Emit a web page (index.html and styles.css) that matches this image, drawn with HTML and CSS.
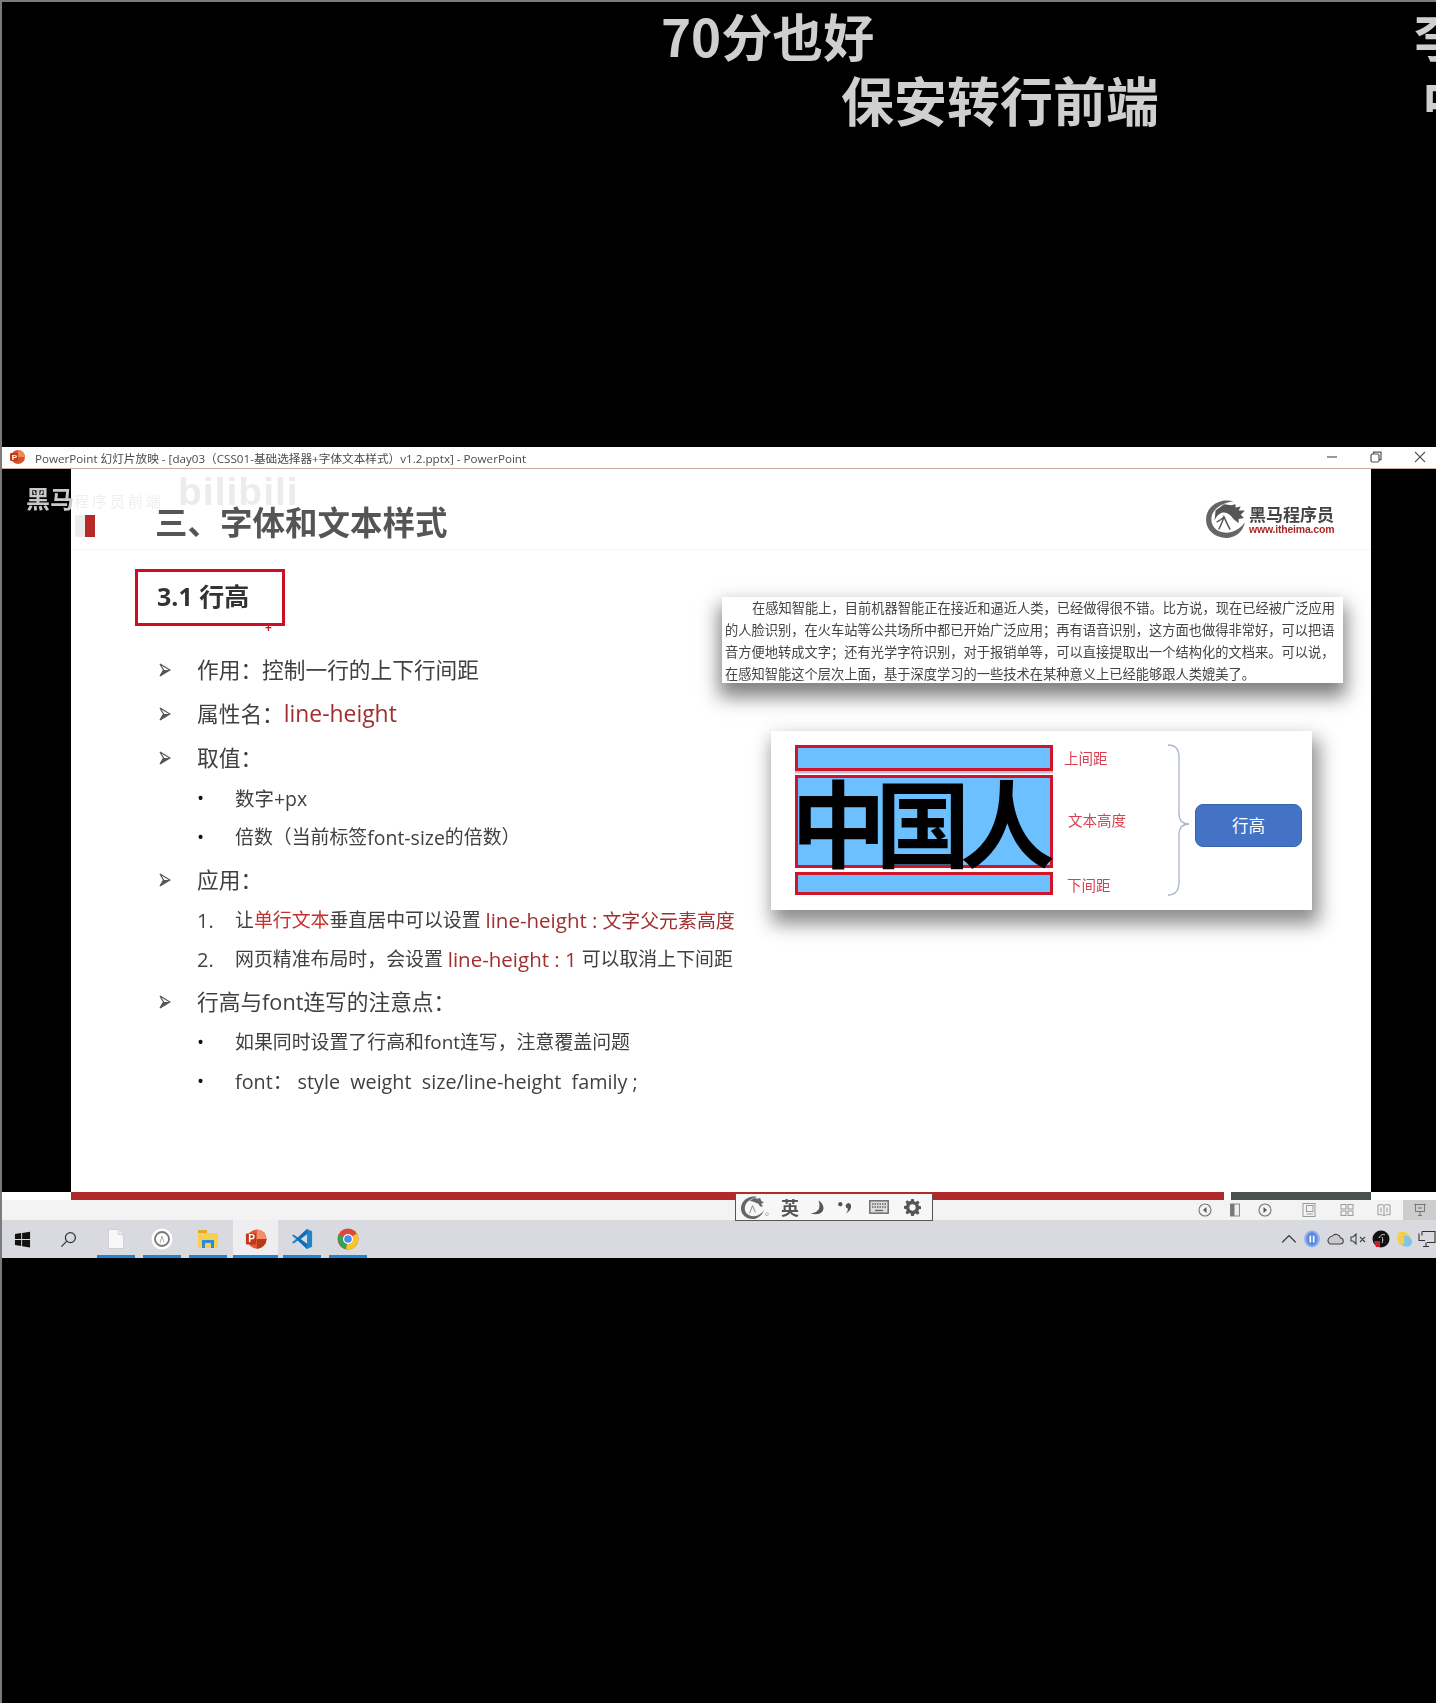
FILE: index.html
```html
<!DOCTYPE html>
<html lang="zh-CN">
<head>
<meta charset="utf-8">
<title>PowerPoint 幻灯片放映</title>
<link rel="stylesheet" href="styles.css">
</head>
<body>
<div class="screen">
  <div class="top-black">
    <span class="dm dm-a">70分也好</span>
    <span class="dm dm-b">保安转行前端</span>
    <span class="dm dm-c">李</span>
    <span class="dm dm-d">中</span>
  </div>
  <div class="window">
    <div class="titlebar">
      <svg class="ppt-mini" viewBox="0 0 16 16"><circle cx="9" cy="8" r="7" fill="#d9502e"/><path d="M9 1a7 7 0 0 1 7 7H9z" fill="#ee8a55"/><rect x="1" y="4" width="8" height="8" rx="1" fill="#c23a1c"/><text x="2.8" y="10.6" class="ppt-p">P</text></svg>
      <span class="title-text">PowerPoint 幻灯片放映 - [day03（CSS01-基础选择器+字体文本样式）v1.2.pptx] - PowerPoint</span>
      <div class="win-ctrls">
        <svg viewBox="0 0 12 12"><path d="M1 6h10" stroke="#555" stroke-width="1.2"/></svg>
        <svg viewBox="0 0 12 12" fill="none" stroke="#555" stroke-width="1.2"><rect x="1" y="3" width="8" height="8" rx="1.5"/><path d="M3.5 3V1.2H11V8.6H9"/></svg>
        <svg viewBox="0 0 12 12"><path d="M1 1l10 10M11 1L1 11" stroke="#555" stroke-width="1.1"/></svg>
      </div>
    </div>
    <div class="stage">
      <div class="slide">
        <header class="slide-head">
          <span class="marker"></span>
          <h1 class="slide-title">三、字体和文本样式</h1>
          <div class="brand">
            <svg class="brand-mark" viewBox="0 0 40 38" fill="none">
              <path d="M28 2C14-1 2 7 2 20c0 10 9 17 19 17 9 0 16-6 18-15-4 6-11 10-18 10C12 32 7 26 7 19 7 11 15 4 28 2z" fill="#666"/>
              <path d="M11 11l8-6 7 1 4-1v3l5-1-2 4h6l-4 4 3 3-5 1v4l-5-4c-3-5-7-7-11-6-3 1-6 4-7 8z" fill="#555"/>
              <path d="M14 29c2-4 4-8 5-12 2 4 4 9 6 12M19 17c-2 2-5 4-7 5" stroke="#555" stroke-width="1.4"/>
            </svg>
            <div class="brand-text">
              <span class="brand-cn">黑马程序员</span>
              <span class="brand-url">www.itheima.com</span>
            </div>
          </div>
        </header>
        <div class="slide-body">
          <section class="col-left">
            <div class="section-box">3.1 行高<span class="cursor-mark">+</span></div>
            <ul class="points">
              <li class="l1"><svg class="arrow" viewBox="0 0 12 14"><path d="M1 1l10 6-10 6 3.500-6z" fill="#fff" stroke="#555" stroke-width="1.200"/><path d="M4.500 7H11l-10 6z" fill="#555"/></svg>作用：控制一行的上下行间距</li>
              <li class="l1"><svg class="arrow" viewBox="0 0 12 14"><path d="M1 1l10 6-10 6 3.500-6z" fill="#fff" stroke="#555" stroke-width="1.200"/><path d="M4.500 7H11l-10 6z" fill="#555"/></svg>属性名：<span class="hl-dark lat">line-height</span></li>
              <li class="l1"><svg class="arrow" viewBox="0 0 12 14"><path d="M1 1l10 6-10 6 3.500-6z" fill="#fff" stroke="#555" stroke-width="1.200"/><path d="M4.500 7H11l-10 6z" fill="#555"/></svg>取值：</li>
              <li class="l2"><span class="mark">•</span><span class="lat-s">数字+px</span></li>
              <li class="l2"><span class="mark">•</span>倍数（当前标签<span class="lat-s">font-size</span>的倍数）</li>
              <li class="l1"><svg class="arrow" viewBox="0 0 12 14"><path d="M1 1l10 6-10 6 3.500-6z" fill="#fff" stroke="#555" stroke-width="1.200"/><path d="M4.500 7H11l-10 6z" fill="#555"/></svg>应用：</li>
              <li class="l2"><span class="mark num">1.</span>让<span class="hl">单行文本</span>垂直居中可以设置 <span class="hl-dark"><span class="lat-r">line-height :</span> 文字父元素高度</span></li>
              <li class="l2"><span class="mark num">2.</span>网页精准布局时，会设置 <span class="hl-dark lat-r">line-height : 1</span> 可以取消上下间距</li>
              <li class="l1"><svg class="arrow" viewBox="0 0 12 14"><path d="M1 1l10 6-10 6 3.500-6z" fill="#fff" stroke="#555" stroke-width="1.200"/><path d="M4.500 7H11l-10 6z" fill="#555"/></svg>行高与font连写的注意点：</li>
              <li class="l2"><span class="mark">•</span>如果同时设置了行高和font连写，注意覆盖问题</li>
              <li class="l2"><span class="mark">•</span><span class="lat-f">font： style&nbsp; weight&nbsp; size/line-height&nbsp; family ;</span></li>
            </ul>
          </section>
          <section class="col-right">
            <div class="doc-card">
              <span class="doc-line doc-first">在感知智能上，目前机器智能正在接近和逼近人类，已经做得很不错。比方说，现在已经被广泛应用</span>
              <span class="doc-line">的人脸识别，在火车站等公共场所中都已开始广泛应用；再有语音识别，这方面也做得非常好，可以把语</span>
              <span class="doc-line">音方便地转成文字；还有光学字符识别，对于报销单等，可以直接提取出一个结构化的文档来。可以说，</span>
              <span class="doc-line">在感知智能这个层次上面，基于深度学习的一些技术在某种意义上已经能够跟人类媲美了。</span>
            </div>
            <div class="diagram">
              <div class="rows">
                <div class="row row-a"><div class="bar bar-a"></div><span class="lab lab-a">上间距</span></div>
                <div class="row row-b"><div class="bar bar-b">中国人</div><span class="lab lab-b">文本高度</span></div>
                <div class="row row-c"><div class="bar bar-c"></div><span class="lab lab-c">下间距</span></div>
              </div>
              <svg class="brace" viewBox="0 0 23 152" fill="none"><path d="M1 1c8 0 11 4 11 12v56c0 7 3 11 10 11-7 0-10 4-10 11v47c0 8-3 13-11 13" stroke="#a9b6cf" stroke-width="1.3"/></svg>
              <div class="lh-btn">行高</div>
            </div>
          </section>
        </div>
      </div>
      <div class="wm-left">黑马</div>
      <div class="wm-faint">程序员前端</div>
      <div class="wm-bili">bilibili</div>
    </div>
    <div class="progress-row">
      <div class="progress-red"></div>
      <div class="progress-dark"></div>
    </div>
    <div class="statusbar">
      <svg class="st" viewBox="0 0 14 14" fill="none"><circle cx="7" cy="7" r="6" stroke="#777" stroke-width="1.100"/><path d="M8.500 4v6L5 7z" fill="#555"/></svg>
      <svg class="st" viewBox="0 0 14 14"><rect x="2.500" y="1" width="9" height="12" fill="#eee" stroke="#888"/><rect x="2.500" y="1" width="4" height="12" fill="#777"/></svg>
      <svg class="st" viewBox="0 0 14 14" fill="none"><circle cx="7" cy="7" r="6" stroke="#777" stroke-width="1.100"/><path d="M5.500 4v6L9 7z" fill="#555"/></svg>
      <svg class="st st-norm" viewBox="0 0 14 14" fill="none" stroke="#999"><rect x="1" y=".5" width="12" height="13"/><rect x="4.500" y="2.500" width="6.500" height="6"/><path d="M4.500 11h6.500"/></svg>
      <svg class="st st-sort" viewBox="0 0 14 14" fill="none" stroke="#999"><rect x="1" y="1.500" width="5" height="4.500"/><rect x="8" y="1.500" width="5" height="4.500"/><rect x="1" y="8" width="5" height="4.500"/><rect x="8" y="8" width="5" height="4.500"/></svg>
      <svg class="st st-read" viewBox="0 0 14 14" fill="none" stroke="#999"><path d="M7 2.500C5.500 1.500 3 1.500 1 2v10c2-.5 4.500-.5 6 .5 1.500-1 4-1 6-.5V2c-2-.5-4.500-.5-6 .5zM7 2.500v10M4 4.500v5M10 4.500v5"/></svg>
      <div class="st-show"><svg class="st" viewBox="0 0 14 14" fill="none" stroke="#777"><path d="M1 1.500h12M2.500 1.500v7h9v-7M7 8.500v4M5 12.500h4M5 5h4"/></svg></div>
    </div>
    <div class="taskbar">
      <div class="tb-sys tb-win"><svg viewBox="0 0 18 18"><path d="M1 3.200l6.600-1v6.300H1zM8.600 2l8.400-1.300v7.800H8.600zM1 9.600h6.600v6.200l-6.600-1zM8.600 9.600H17v7.800l-8.400-1.300z" fill="#111"/></svg></div>
      <div class="tb-sys tb-search"><svg viewBox="0 0 18 18" fill="none" stroke="#333" stroke-width="1.300"><circle cx="11" cy="7" r="5.300"/><path d="M7 11l-5.500 5.500"/></svg></div>
      <div class="tb-app"><svg viewBox="0 0 18 22"><path d="M1.500 1.500h10l5 5v14h-15z" fill="#f8f8f8" stroke="#cfcfd4"/><path d="M11.500 1.500v5h5" fill="#eee" stroke="#cfcfd4"/></svg></div>
      <div class="tb-app"><svg viewBox="0 0 22 22" fill="none"><circle cx="11" cy="11" r="10.500" fill="#fff"/><circle cx="11" cy="11" r="7" stroke="#777" stroke-width="1.800"/><path d="M9 15l2-7 2 6" stroke="#999" stroke-width=".8"/></svg></div>
      <div class="tb-app"><svg viewBox="0 0 22 20"><path d="M1 2h8v2h12v15H1z" fill="#f6cf57"/><rect x="1" y="1" width="9" height="3" fill="#e2a92c"/><path d="M5 11h12v8h-3v-5H8v5H5z" fill="#2d8ccf"/></svg></div>
      <div class="tb-app tb-ppt"><svg viewBox="0 0 24 22"><circle cx="13" cy="11" r="10.500" fill="#dc5a36"/><path d="M13 .5A10.500 10.500 0 0 1 23.500 11H13z" fill="#f0906a"/><path d="M13 11h10.500A10.500 10.500 0 0 1 13 21.500z" fill="#b93a1a"/><rect x="1" y="5" width="11" height="12" rx="1" fill="#c4371a"/><text x="3.500" y="14.500" class="ppt-p big">P</text></svg></div>
      <div class="tb-app"><svg viewBox="0 0 24 24"><path d="M17.500 1L23 3.500v17L17.500 23 7.500 13.700 3 17 1 15.800 5.500 12 1 8.200 3 7l4.500 3.300z" fill="#1f84cc"/><path d="M17.500 1v22L7.500 13.700 5.500 12l2-1.700z" fill="#0f6fb8"/><path d="M17.500 6.800v10.400L10.500 12z" fill="#d9dae0"/></svg></div>
      <div class="tb-app"><svg viewBox="0 0 22 22"><circle cx="11" cy="11" r="10.500" fill="#e0463a"/><path d="M11 11L2 6.500A10.500 10.500 0 0 0 9 21.300z" fill="#34a353"/><path d="M11 11l8.700-5.600h.1A10.500 10.500 0 0 1 9 21.300z" fill="#f7c52e"/><circle cx="11" cy="11" r="5" fill="#fff"/><circle cx="11" cy="11" r="3.800" fill="#4b8bf0"/></svg></div>
      <div class="tray">
        <svg viewBox="0 0 16 16" fill="none"><path d="M2 11l6-6 6 6" stroke="#333" stroke-width="1.200"/></svg>
        <svg viewBox="0 0 16 16"><ellipse cx="8" cy="8" rx="7" ry="7.500" fill="#8fb0ee"/><ellipse cx="8" cy="8" rx="5" ry="6" fill="#5f89de"/><path d="M6.500 5v6M9.500 5v6" stroke="#fff" stroke-width="1.400"/></svg>
        <svg viewBox="0 0 18 16" fill="none"><path d="M4.500 13h9.500a3 3 0 0 0 .5-6C13.500 3.500 9 2 6.500 5 3.500 5 1 9 2.500 11.500c.5 1 1 1.500 2 1.500z" fill="#c9c9ce" stroke="#444" stroke-width="1.100"/></svg>
        <svg viewBox="0 0 18 16" fill="none" stroke="#444" stroke-width="1.100"><path d="M2 6v4h2l3 3V3L4 6zM11 6l5 5M16 6l-5 5"/></svg>
        <svg viewBox="0 0 18 18"><circle cx="9" cy="9" r="8.500" fill="#111"/><path d="M2 11h6v6H4z" fill="#d11a2a"/><path d="M7 8c2-4 5-4 6-3M10 13c1-2 1-4 0-6" stroke="#ddd" fill="none"/></svg>
        <svg viewBox="0 0 18 18"><path d="M4 2c6-2 12 2 11 8-1 5-6 7-9 5C2 13 1 5 4 2z" fill="#f3cf4e"/><path d="M8 6c4-1 9 1 9 6s-6 6-10 3c3-2 3-6 1-9z" fill="#7fc4ea"/></svg>
        <svg viewBox="0 0 18 18" fill="none" stroke="#333" stroke-width="1.100"><path d="M4 1.500h13v11H9M4 1.500v4M8 12.500v4M5 16.500h6"/><path d="M1 3.500v7h6"/></svg>
      </div>
    </div>
    <div class="ime">
      <svg class="ime-logo" viewBox="0 0 26 26" fill="none"><path d="M18 2C9 0 1 6 1 14c0 6 5 11 12 11 6 0 11-5 12-10-2 4-6 7-11 7-6 0-9-4-9-8C5 8 10 4 18 2z" fill="#666"/><path d="M10 6l5-3 3 1 3-1 1 3 3 2-3 1 2 3-3 0-2-3-5-2z" fill="#666"/><path d="M10 19l3-8 3 7" stroke="#888" stroke-width="1"/></svg>
      <span class="ime-dot">。</span>
      <span class="ime-en">英</span>
      <svg class="ime-ic ime-moon" viewBox="0 0 16 16"><path d="M9 .5c5 3 7 8 4 12-2.500 3-8 3.500-12.500 1.500 4.500 0 9-2 9.500-6.500C10.300 5 10 2.500 9 .5z" fill="#555"/></svg>
      <svg class="ime-ic ime-comma" viewBox="0 0 15 16"><circle cx="2.500" cy="4.500" r="2.300" fill="#555"/><path d="M9.500 4a2.700 2.700 0 0 1 4.500 2.300c0 4-2.500 6.500-5.500 8 1.500-1.800 2.300-3.500 2-5.200A2.800 2.800 0 0 1 9.500 4z" fill="#555"/></svg>
      <svg class="ime-ic ime-kb" viewBox="0 0 20 14" fill="none"><rect x=".8" y=".8" width="18.400" height="12.400" fill="#ddd" stroke="#666" stroke-width="1.400"/><path d="M3 4h14M3 7h14" stroke="#666" stroke-width="1.400" stroke-dasharray="1.500 1"/><path d="M6 10.500h8" stroke="#666" stroke-width="1.400"/></svg>
      <svg class="ime-ic ime-gear" viewBox="0 0 20 20"><path d="M8.500 0h3l.5 2.600 2 .8 2.200-1.500 2.100 2.100-1.500 2.200.8 2 2.600.5v3l-2.600.5-.8 2 1.500 2.200-2.100 2.100-2.200-1.500-2 .8-.5 2.600h-3L8 17.400l-2-.8-2.200 1.500-2.100-2.100L3.200 13.800l-.8-2L-.2 11.300v-3l2.600-.5.800-2L1.700 3.600l2.100-2.100L6 3l2-.8z" fill="#555"/><circle cx="10" cy="10" r="3.700" fill="#f7f7f7"/></svg>
    </div>
  </div>
</div>
</body>
</html>
```

FILE: styles.css
```css
* { box-sizing: border-box; }
html, body { margin: 0; padding: 0; background: #000; }
body { width: 1436px; height: 1703px; overflow: hidden; font-family: "Open Sans", "Noto Sans CJK SC", sans-serif; }
.screen { width: 1436px; height: 1703px; border-top: 2px solid #7b7b7b; border-left: 2px solid #7b7b7b; background: #000; overflow: hidden; }

/* floating comments */
.top-black { position: relative; height: 445px; }
.dm { position: absolute; font-family: "Noto Sans CJK SC", sans-serif; font-weight: 700; line-height: 60px; color: #cfcfcf; white-space: nowrap; }
.dm-a { left: 659px; top: 3px; font-size: 51px; }
.dm-b { left: 839px; top: 67px; font-size: 53px; }
.dm-c { left: 1412px; top: 3px; font-size: 52px; }
.dm-d { left: 1420px; top: 67px; font-size: 52px; }

/* window */
.window { position: relative; filter: blur(.4px); }
.titlebar { height: 22px; background: #fff; border-bottom: 1px solid #c9ab9f; display: flex; align-items: center; padding-bottom: 1px; }
.ppt-mini { width: 16px; height: 16px; margin-left: 7px; }
.ppt-p { font-family: "Liberation Sans", sans-serif; font-weight: 700; font-size: 8px; fill: #fff; }
.ppt-p.big { font-size: 11px; }
.title-text { margin-left: 10px; font-size: 11.650px; color: #4a4a4a; white-space: nowrap; font-family: "Open Sans", "Noto Sans CJK SC", sans-serif; }
.win-ctrls { margin-left: auto; display: flex; align-items: center; gap: 32px; padding-right: 10px; }
.win-ctrls svg { width: 12px; height: 12px; display: block; }

.stage { position: relative; height: 723px; padding-left: 69px; }
.slide { width: 1300px; height: 723px; background: #fff; }
.slide-head { height: 81px; padding-top: 24px; padding-left: 14px; display: flex; align-items: center; border-bottom: 1px solid #f5f5f5; position: relative; z-index: 1; }
.marker { width: 10px; height: 22px; background: #b72a2a; margin-top: 9px; box-shadow: -10px 0 0 #ededed; }
.slide-title { margin: 0 0 0 60px; font-size: 32.500px; line-height: 40px; font-weight: 700; color: #555; font-family: "Noto Sans CJK SC", sans-serif; white-space: nowrap; }
.brand { margin-left: auto; margin-right: 36px; display: flex; align-items: center; gap: 3px; margin-top: -5px; }
.brand-mark { width: 42px; height: 40px; display: block; }
.brand-text { display: flex; flex-direction: column; width: 86px; padding-top: 4px; }
.brand-cn { font-size: 17px; line-height: 18px; font-weight: 700; color: #444; font-family: "Noto Sans CJK SC", sans-serif; white-space: nowrap; }
.brand-url { font-family: "Liberation Sans", sans-serif; font-weight: 700; font-size: 10.500px; line-height: 13px; color: #a92a2a; white-space: nowrap; letter-spacing: -.2px; }

.slide-body { display: flex; }
.col-left { width: 651px; padding-left: 64px; padding-top: 19px; }
.section-box { position: relative; width: 150px; height: 57px; border: 3px solid #cc0f25; padding-left: 19px; font-size: 25px; line-height: 48px; font-weight: 700; color: #333; white-space: nowrap; }
.cursor-mark { position: absolute; left: 127px; top: 50px; font-size: 12px; line-height: 12px; color: #cc0f25; font-weight: 700; }

.points { list-style: none; margin: 23px 0 0; padding: 0 0 0 24px; color: #404040; }
.points li { display: flex; align-items: center; white-space: pre; }
.l1 { height: 42px; margin-top: 2px; font-size: 21.700px; line-height: 42px; }
.l2 { height: 39px; font-size: 18.900px; line-height: 39px; }
.arrow { width: 12px; height: 14px; margin-right: 26px; flex: none; }
.mark { display: inline-block; width: 38px; flex: none; margin-left: 38px; color: #111; }
.mark.num { font-size: 20px; color: #444; }
.hl { color: #c4322e; }
.hl-dark { color: #a03030; }
.lat { font-size: 1.055em; }
.lat-r { font-size: 1.085em; }
.lat-f { font-size: 1.045em; }
.lat-s { font-size: 1.03em; }

.col-right { width: 648px; padding-top: 48px; }
.doc-card { width: 621px; height: 86px; background: #fff; padding-left: 3px; box-shadow: 0 11px 18px 3px rgba(0,0,0,.5); font-family: "Noto Sans CJK SC", sans-serif; font-size: 13.260px; line-height: 22px; color: #444; }
.doc-line { display: block; white-space: nowrap; }
.doc-first { padding-left: 27px; margin-top: -1px; }

.diagram { margin: 48px 0 0 49px; width: 541px; height: 179px; background: #fff; box-shadow: 4px 11px 18px 3px rgba(0,0,0,.45); display: flex; align-items: flex-start; padding: 13px 0 0 24px; }
.rows { width: 372px; display: flex; flex-direction: column; gap: 4px; padding-top: 1px; }
.row { display: flex; align-items: center; }
.bar { width: 258px; background: #6cc0ff; border: 3px solid #d0142c; flex: none; }
.bar-a { height: 26px; box-shadow: 0 2.500px 0 #c3b9d6; }
.bar-b { height: 93px; font-family: "Noto Sans CJK SC", sans-serif; font-weight: 700; font-size: 95px; letter-spacing: -10.500px; line-height: 84px; color: #000; text-indent: -7px; text-align: left; white-space: nowrap; }
.bar-c { height: 23px; }
.lab { font-family: "Noto Sans CJK SC", sans-serif; font-size: 14.500px; color: #dc3f50; white-space: nowrap; }
.lab-a { margin-left: 11px; margin-bottom: 1px; }
.lab-b { margin-left: 15px; margin-bottom: 5px; }
.lab-c { margin-left: 14px; margin-top: 1px; }
.brace { width: 23px; height: 152px; flex: none; }
.lh-btn { margin: 60px 0 0 5px; width: 107px; height: 43px; background: #4472c4; border: 1px solid #3a62a8; border-radius: 8px; color: #fff; font-family: "Noto Sans CJK SC", sans-serif; font-size: 16.500px; line-height: 41px; text-align: center; }

.progress-row { height: 8px; display: flex; background: #fff; padding-left: 69px; }
.progress-red { width: 1153px; background: #b12a2a; }
.progress-dark { width: 140px; margin-left: 7px; background: #4a4f4f; }

.statusbar { height: 20px; background: #f3f3f3; display: flex; align-items: center; padding-left: 1196px; }
.st { width: 14px; height: 14px; display: block; margin-right: 16px; flex: none; }
.st-norm { margin-left: 14px; margin-right: 24px; }
.st-sort { margin-right: 23px; }
.st-read { margin-right: 0; }
.st-show { margin-left: auto; width: 33px; height: 20px; background: #cdcdcd; display: flex; align-items: center; justify-content: center; }
.st-show .st { margin: 0; }

.taskbar { height: 38px; background: #d9dae0; display: flex; align-items: stretch; gap: 8px; }
.tb-sys { display: flex; align-items: center; justify-content: center; flex: none; }
.tb-win { width: 40px; margin-right: -8px; }
.tb-win svg { width: 17px; height: 17px; }
.tb-search { width: 52px; margin-right: -5px; }
.tb-search svg { width: 17px; height: 17px; }
.tb-app { width: 38px; flex: none; display: flex; align-items: center; justify-content: center; border-bottom: 3px solid #1a86d8; padding-top: 2px; }
.tb-app svg { width: 22px; height: 22px; }
.tb-ppt { width: 45px; margin: 0 -3px 0 -2px; background: #eeeef0; }
.tray { margin-left: auto; display: flex; align-items: center; }
.tray svg { width: 18px; height: 18px; margin: 0 2.500px; flex: none; }
.tray svg:last-child { margin: 0 0 0 3px; }

.ime { position: absolute; left: 733px; top: 746px; width: 198px; height: 28px; background: #f7f7f7; border: 1px solid #555; display: flex; align-items: center; padding-left: 4px; }
.ime-logo { width: 25px; height: 25px; flex: none; }
.ime-dot { font-size: 10px; width: 16px; color: #777; font-family: "Noto Sans CJK SC", sans-serif; padding-top: 6px; flex: none; }
.ime-en { font-family: "Noto Sans CJK SC", sans-serif; font-weight: 700; font-size: 18px; line-height: 26px; color: #555; width: 29px; flex: none; }
.ime-ic { flex: none; }
.ime-moon { width: 15px; height: 15px; margin-right: 13px; }
.ime-comma { width: 14px; height: 15px; margin-right: 17px; }
.ime-kb { width: 20px; height: 14px; margin-right: 15px; }
.ime-gear { width: 17px; height: 17px; }

/* video watermarks */
.wm-left { position: absolute; left: 24px; top: 15px; font-family: "Noto Sans CJK SC", sans-serif; font-weight: 700; font-size: 24px; line-height: 28px; color: #c9c9c9; }
.wm-faint { position: absolute; left: 72px; top: 22px; font-family: "Noto Sans CJK SC", sans-serif; font-size: 15px; letter-spacing: 3px; line-height: 20px; color: #efefef; white-space: nowrap; }
.wm-bili { position: absolute; left: 176px; top: 1px; font-family: "Liberation Sans", sans-serif; font-weight: 700; font-size: 39px; line-height: 44px; color: #ececec; letter-spacing: 1px; white-space: nowrap; }
```
